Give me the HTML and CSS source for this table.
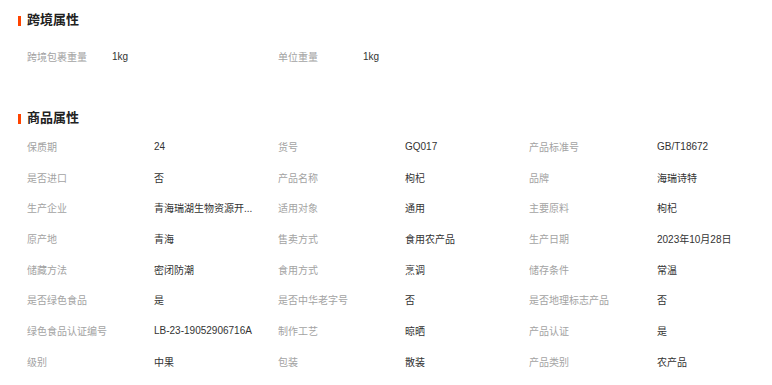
FILE: index.html
```html
<!DOCTYPE html>
<html lang="zh-CN">
<head>
<meta charset="utf-8">
<title>商品属性</title>
<link rel="stylesheet" href="styles.css">
</head>
<body>
<div class="page">
  <section class="section cross">
    <h2 class="title">跨境属性</h2>
    <div class="cross-grid">
      <div class="label">跨境包裹重量</div><div class="value">1kg</div>
      <div class="label">单位重量</div><div class="value">1kg</div>
    </div>
  </section>
  <section class="section goods">
    <h2 class="title">商品属性</h2>
    <div class="attr-grid">
      <div class="label">保质期</div><div class="value">24</div>
      <div class="label">货号</div><div class="value">GQ017</div>
      <div class="label">产品标准号</div><div class="value">GB/T18672</div>

      <div class="label">是否进口</div><div class="value">否</div>
      <div class="label">产品名称</div><div class="value">枸杞</div>
      <div class="label">品牌</div><div class="value">海瑞诗特</div>

      <div class="label">生产企业</div><div class="value">青海瑞湖生物资源开...</div>
      <div class="label">适用对象</div><div class="value">通用</div>
      <div class="label">主要原料</div><div class="value">枸杞</div>

      <div class="label">原产地</div><div class="value">青海</div>
      <div class="label">售卖方式</div><div class="value">食用农产品</div>
      <div class="label">生产日期</div><div class="value">2023年10月28日</div>

      <div class="label">储藏方法</div><div class="value">密闭防潮</div>
      <div class="label">食用方式</div><div class="value">烹调</div>
      <div class="label">储存条件</div><div class="value">常温</div>

      <div class="label">是否绿色食品</div><div class="value">是</div>
      <div class="label">是否中华老字号</div><div class="value">否</div>
      <div class="label">是否地理标志产品</div><div class="value">否</div>

      <div class="label">绿色食品认证编号</div><div class="value">LB-23-19052906716A</div>
      <div class="label">制作工艺</div><div class="value">晾晒</div>
      <div class="label">产品认证</div><div class="value">是</div>

      <div class="label">级别</div><div class="value">中果</div>
      <div class="label">包装</div><div class="value">散装</div>
      <div class="label">产品类别</div><div class="value">农产品</div>
    </div>
  </section>
</div>
</body>
</html>
```

FILE: styles.css
```css
html, body {
  margin: 0;
  padding: 0;
  background: #fff;
}

.page {
  padding: 10px 0 0 18px;
  font-family: "Liberation Sans", "Noto Sans CJK SC", sans-serif;
  font-size: 10px;
  overflow: hidden;
}

.title {
  display: flex;
  align-items: center;
  gap: 6px;
  margin: 0;
  height: 20px;
  font-size: 13px;
  font-weight: bold;
  color: #222;
  line-height: 20px;
}

.title::before {
  content: "";
  width: 3px;
  height: 10px;
  margin-top: 2px;
  background: #ff4400;
}

.cross-grid {
  display: grid;
  grid-template-columns: 85px 166px 85px 1fr;
  padding-left: 9px;
  margin-top: 11px;
  height: 31px;
  align-items: center;
}

.goods {
  margin-top: 36px;
}

.attr-grid {
  display: grid;
  grid-template-columns: 127px 124px 127px 124px 128px 1fr;
  grid-auto-rows: 30.7px;
  align-items: center;
  padding-left: 9px;
  margin-top: 3px;
}

.label {
  color: #a3a3a3;
  white-space: nowrap;
}

.value {
  color: #333;
  white-space: nowrap;
}
```
